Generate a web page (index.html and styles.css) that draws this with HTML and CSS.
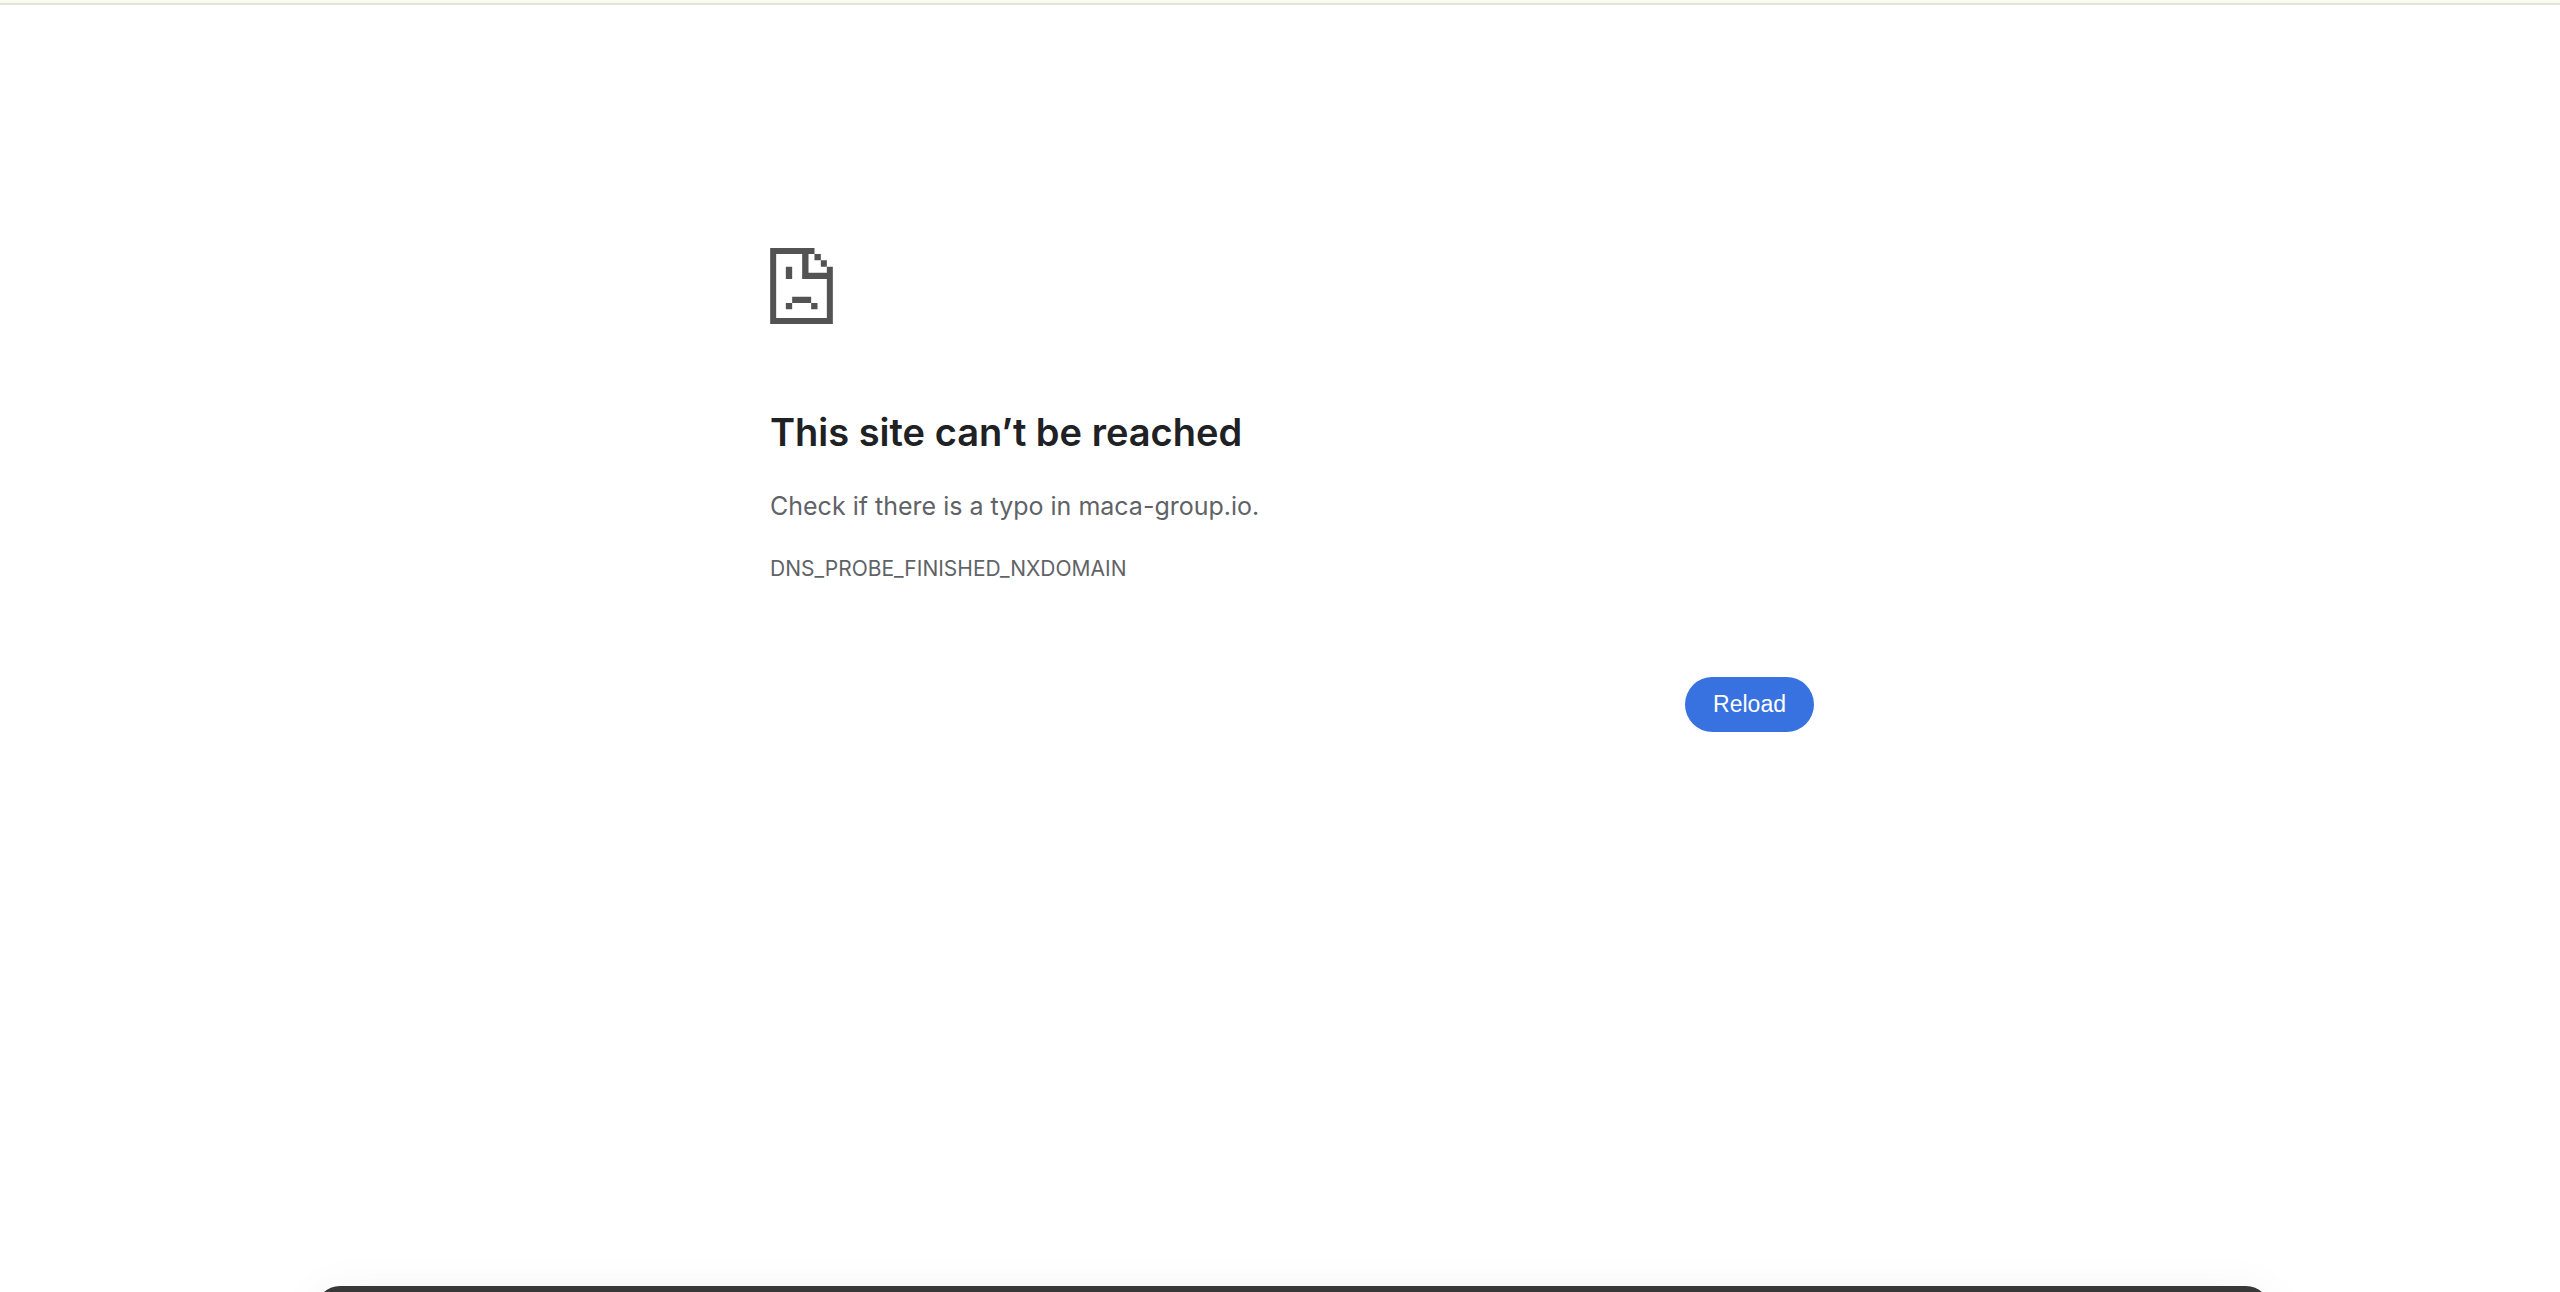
FILE: index.html
```html
<!DOCTYPE html>
<html lang="en">
<head>
	<meta charset="UTF-8">
	<meta name="viewport" content="width=device-width, initial-scale=1.0">
	<title>maca-group.io</title>
	<link rel="stylesheet" href="styles.css">
</head>
<body>
	<div class="top-strip"></div>
	<main class="error-page">
		<svg class="icon" viewBox="0 0 188 228" aria-hidden="true">
			<path d="M0 0H133V18H115V74H170V56H188V228H0ZM18 18V210H170V93H96V18Z" fill-rule="evenodd"/>
			<path d="M133 18H152V37H133ZM152 37H170V56H152Z"/>
			<path d="M47 56H66V93H47ZM66 146H123V165H66ZM47 165H66V184H47ZM123 165H142V184H123Z"/>
		</svg>
		<h1>This site can’t be reached</h1>
		<p class="message">Check if there is a typo in maca-group.io.</p>
		<p class="error-code">DNS_PROBE_FINISHED_NXDOMAIN</p>
		<div class="buttons">
			<button class="reload" type="button">Reload</button>
		</div>
	</main>
	<div class="dock"></div>

	<script>
		document.getElementsByClassName("reload")[0].onclick = function()
		{
			location.reload();
		}
	</script>
</body>
</html>
```
FILE: styles.css
```css
body{
	margin: 0;
	background-color: rgb(255,255,255);
	color: rgb(95,99,104);
	font-family: Inter, sans-serif;
}
.top-strip{
	height: 3px;
	background-color: rgb(249,250,240);
	border-bottom: solid 2px rgb(226,227,217);
}
.error-page{
	box-sizing: border-box;
	width: 100%;
	max-width: 1068px;
	margin: 0 auto;
	padding: 243px 0 0 24px;
}
.icon{
	display: block;
	width: 63px;
	height: 76px;
	fill: rgb(83,83,83);
}
h1{
	margin: 82px 0 0;
	font-size: 38px;
	font-weight: 600;
	line-height: 52px;
	color: rgb(32,33,36);
}
.message{
	margin: 27px 0 0;
	font-size: 25px;
	line-height: 42px;
}
.error-code{
	margin: 24px 0 0;
	font-size: 21px;
	line-height: 36px;
}
.buttons{
	display: flex;
	justify-content: flex-end;
	margin-top: 90px;
}
.reload{
	height: 55px;
	padding: 0 28px;
	border: none;
	border-radius: 28px;
	background-color: rgb(55,114,224);
	color: rgb(255,255,255);
	font-family: "Liberation Sans", Arial, sans-serif;
	font-size: 23px;
	cursor: pointer;
}
.reload:hover{
	background-color: rgb(45,98,200);
}
/* top edge of the panel that peeks in from below */
.dock{
	position: fixed;
	bottom: -54px;
	left: 316px;
	right: 290px;
	height: 60px;
	border-radius: 24px 24px 0 0;
	background-color: rgb(56,56,56);
	box-shadow: 0 8px 50px rgba(0,0,0,0.06);
}
```
